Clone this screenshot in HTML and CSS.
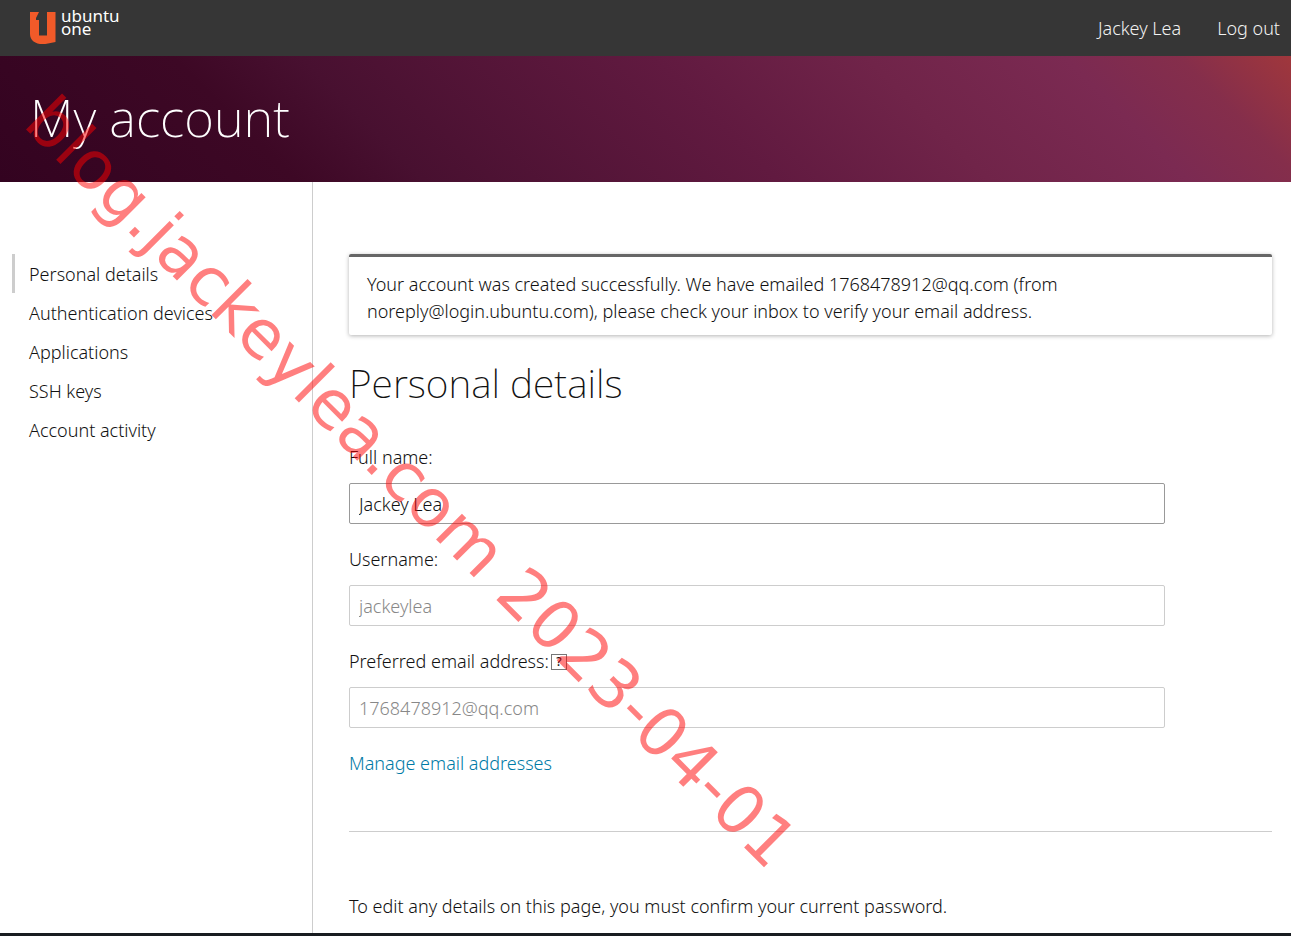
FILE: index.html
```html
<!DOCTYPE html>
<html lang="en">
  <head>
    <meta charset="UTF-8" />
    <meta name="viewport" content="width=device-width, initial-scale=1.0" />
    <title>My account</title>
    <link rel="stylesheet" href="styles.css">
  </head>
  <body>
    <header class="header">
      <a class="logo" href="#">
        <svg class="logo-mark" viewBox="0 -2 26 38" width="26" height="38" aria-hidden="true">
          <path fill="#f15a29" d="M0 1H9L6 7V9H9V24.500H17V1H25.500V31L18 32.500C8 34.500 0 31 0 23Z"/>
        </svg>
        <span class="logo-text">ubuntu<br>one</span>
      </a>
      <nav class="user-nav">
        <a href="#">Jackey Lea</a>
        <a href="#">Log out</a>
      </nav>
    </header>

    <div class="banner">
      <h1>My account</h1>
    </div>

    <div class="content">
      <nav class="sidebar">
        <ul>
          <li class="active"><a href="#">Personal details</a></li>
          <li><a href="#">Authentication devices</a></li>
          <li><a href="#">Applications</a></li>
          <li><a href="#">SSH keys</a></li>
          <li><a href="#">Account activity</a></li>
        </ul>
      </nav>

      <main class="main">
        <div class="notification">
          <p>Your account was created successfully. We have emailed 1768478912@qq.com (from noreply@login.ubuntu.com), please check your inbox to verify your email address.</p>
        </div>

        <h2>Personal details</h2>

        <form>
          <div class="fields">
            <div class="field">
              <label for="fullname">Full name:</label>
              <input type="text" id="fullname" name="fullname" value="Jackey Lea">
            </div>
            <div class="field">
              <label for="username">Username:</label>
              <input type="text" id="username" name="username" value="jackeylea" disabled>
            </div>
            <div class="field">
              <div class="label-row">
                <label for="email">Preferred email address:</label>
                <a class="help" href="#">?</a>
              </div>
              <input type="text" id="email" name="email" value="1768478912@qq.com" disabled>
            </div>
            <a class="manage" href="#">Manage email addresses</a>
          </div>
          <hr>
          <p>To edit any details on this page, you must confirm your current password.</p>
        </form>
      </main>
    </div>

    <footer class="footer"></footer>

    <div class="watermark">blog.jackeylea.com 2023-04-01</div>
  </body>
</html>
```
FILE: styles.css
```css
* {
  box-sizing: border-box;
}
body {
  display: flex;
  flex-direction: column;
  min-height: 100vh;
  margin: 0;
  overflow-x: hidden;
  position: relative;
  font-family: "Noto Sans", "Open Sans", sans-serif;
  font-size: 18px;
  font-weight: 300;
  line-height: 27px;
  color: #111;
  background-color: #fff;
}
a {
  color: inherit;
  text-decoration: none;
}
h1,
h2,
p,
ul {
  margin: 0;
  padding: 0;
}
.header {
  display: flex;
  justify-content: space-between;
  align-items: center;
  height: 56px;
  padding: 0 11px 0 30px;
  background-color: #363636;
  color: #f2f2f2;
}
.logo {
  display: flex;
  gap: 5px;
}
.logo-text {
  font-size: 17px;
  font-weight: 400;
  line-height: 13px;
  color: #fff;
}
.user-nav {
  display: flex;
  gap: 36px;
}
.banner {
  padding: 28px 30px 32px;
  background: linear-gradient(45deg, #330320 0%, #3d0825 21%, #481030 30%, #611a40 55%, #702449 70%, #7b2a52 84%, #852e4b 92%, #a0373c 100%);
}
h1 {
  font-size: 51px;
  font-weight: 200;
  line-height: 66px;
  color: #fff;
}
.content {
  display: flex;
  flex: 1;
}
.sidebar {
  width: 313px;
  flex-shrink: 0;
  padding: 72px 12px;
  border-right: 1px solid #cdcdcd;
}
.sidebar ul {
  list-style: none;
}
.sidebar li {
  padding: 7px 0 5px 14px;
  border-left: 3px solid transparent;
}
.sidebar .active {
  border-left-color: #cdcdcd;
}
.main {
  flex: 1;
  padding: 72px 19px 13px 36px;
}
.notification {
  padding: 14px 18px 10px;
  border-top: 3px solid #666;
  border-radius: 2px;
  box-shadow: 0 1px 4px rgba(0, 0, 0, 0.3);
}
.notification p {
  max-width: 720px;
}
h2 {
  margin: 24px 0 37px;
  font-size: 39px;
  font-weight: 200;
  line-height: 48px;
}
.fields {
  display: flex;
  flex-direction: column;
  align-items: flex-start;
  gap: 22px;
  padding-right: 107px;
}
.field {
  display: flex;
  flex-direction: column;
  gap: 12px;
  width: 100%;
}
.label-row {
  display: flex;
  align-items: center;
  gap: 2px;
}
.help {
  width: 16px;
  height: 16px;
  border: 1px solid #777;
  font-size: 12px;
  font-weight: 500;
  line-height: 14px;
  text-align: center;
}
input {
  width: 100%;
  height: 41px;
  padding: 0 9px;
  border: 1px solid #999;
  border-radius: 2px;
  background-color: #fff;
  font: inherit;
  color: #111;
}
input:disabled {
  border-color: #cdcdcd;
  color: #888;
}
.manage {
  color: #007aa6;
}
hr {
  height: 1px;
  margin: 54px 0 61px;
  border: 0;
  background-color: #cdcdcd;
}
.footer {
  height: 3px;
  background-color: #181c20;
}
.watermark {
  position: absolute;
  top: 66px;
  left: 14px;
  transform: rotate(45deg);
  transform-origin: 0 100%;
  font-family: "DejaVu Sans", sans-serif;
  font-size: 67px;
  font-weight: 400;
  line-height: 67px;
  white-space: nowrap;
  color: rgba(255, 0, 0, 0.5);
  pointer-events: none;
}
```
